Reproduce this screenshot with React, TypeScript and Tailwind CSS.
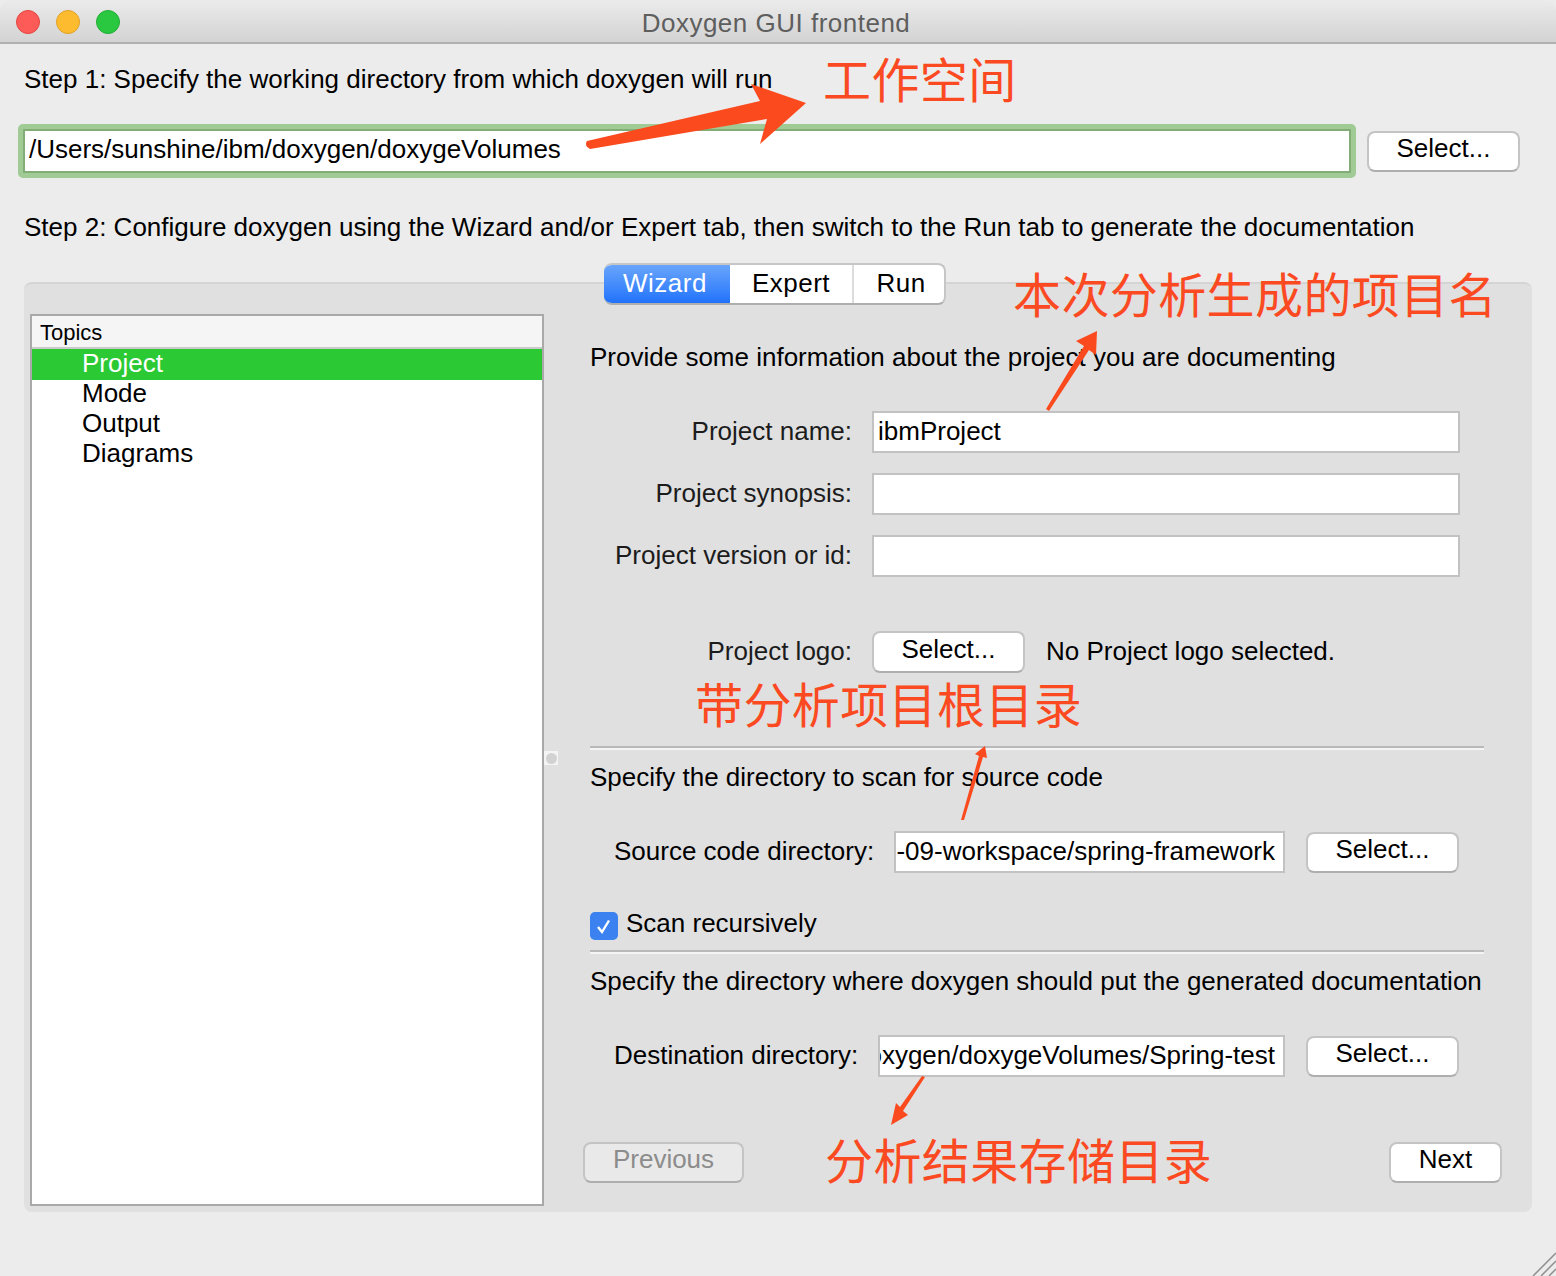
import React from 'react';

const CJK = "font-['Noto_Sans_CJK_SC',sans-serif] text-[#fb4a22] font-normal text-[48px] leading-none tracking-[0.4px] whitespace-nowrap absolute";

const MacButton = ({ label, className = '', disabled = false }: { label: string; className?: string; disabled?: boolean }) => (
  <div
    className={`flex items-center justify-center rounded-[8px] border-2 border-[#c4c4c4] border-b-[#aeaeae] pb-[7px] ${
      disabled ? 'bg-[#e9e9e9] text-[#8c8c8c]' : 'bg-white text-black'
    } ${className}`}
  >
    {label}
  </div>
);

const Field = ({ value = '', className = '', clip = false }: { value?: string; className?: string; clip?: boolean }) => (
  <div
    className={`h-[42px] bg-white border-2 border-[#c2c2c2] flex items-center overflow-hidden whitespace-nowrap pb-[2px] ${
      clip ? 'justify-end pr-[8px]' : 'pl-[4px]'
    } ${className}`}
  >
    <span className="shrink-0">{value}</span>
  </div>
);

const Divider = () => (
  <div className="w-[894px]">
    <div className="h-[2px] bg-[#b9b9b9]" />
    <div className="h-[2px] bg-[#f4f4f4]" />
  </div>
);

export default function App() {
  return (
    <div className="relative w-[1556px] h-[1276px] overflow-hidden bg-[#ececec] text-black text-[26px] leading-[30px] font-['Liberation_Sans',sans-serif]">
      {/* title bar */}
      <div className="relative flex items-center justify-center h-[44px] pt-[3px] pr-[4px] tracking-[0.5px] bg-gradient-to-b from-[#ebebeb] to-[#d3d3d3] border-b-2 border-[#b1b1b1] rounded-t-[10px] text-[#5e5e5e]">
        <div className="absolute left-[16px] top-[10px] flex gap-[16px]">
          <div className="w-[24px] h-[24px] rounded-full bg-[#fc5b57] border border-[#e3463f]" />
          <div className="w-[24px] h-[24px] rounded-full bg-[#fdbb2f] border border-[#e0a127]" />
          <div className="w-[24px] h-[24px] rounded-full bg-[#29c840] border border-[#22ad35]" />
        </div>
        Doxygen GUI frontend
      </div>

      {/* step 1 */}
      <div className="pl-[24px] pt-[20px] h-[80px]">Step 1: Specify the working directory from which doxygen will run</div>
      <div className="flex items-start pl-[18px]">
        <div className="w-[1338px] h-[54px] rounded-[5px] bg-[#a0cb94] p-[5px]">
          <div className="h-[44px] bg-white border-2 border-[#82ad77] flex items-center pl-[4px] pb-[4px]">/Users/sunshine/ibm/doxygen/doxygeVolumes</div>
        </div>
        <MacButton label="Select..." className="w-[153px] h-[41px] ml-[11px] mt-[7px]" />
      </div>

      {/* step 2 */}
      <div className="pl-[24px] pt-[34px] h-[85px]">Step 2: Configure doxygen using the Wizard and/or Expert tab, then switch to the Run tab to generate the documentation</div>

      {/* tab panel */}
      <div className="relative ml-[24px] mt-[19px] w-[1508px] h-[930px] bg-[#e0e0e0] border-t-2 border-[#d4d4d4] rounded-[8px]">
        <div className="absolute left-[580px] top-[-21px] flex w-[342px] h-[42px] rounded-[8px] overflow-hidden border-2 border-l-0 border-[#c6c6c6] border-b-[#aeaeae] bg-white tracking-[0.5px]">
          <div className="w-[126px] -mt-[2px] -mb-[2px] flex items-center justify-center pb-[2px] pr-[4px] text-white bg-gradient-to-b from-[#6ba7fb] to-[#1b6ffb]">Wizard</div>
          <div className="w-[124px] flex items-center justify-center pb-[2px] border-r-2 border-[#dcdcdc]">Expert</div>
          <div className="flex-1 flex items-center justify-center pb-[2px] pl-[4px]">Run</div>
        </div>

        <div className="flex pl-[6px] pt-[30px]">
          {/* topics list */}
          <div className="w-[514px] h-[892px] shrink-0 border-2 border-[#a9a9a9] bg-white">
            <div className="h-[33px] bg-[#f5f5f5] border-b-2 border-[#c9c9c9] pl-[8px] text-[22px] leading-[34px]">Topics</div>
            <div className="h-[31px] bg-[#2bca35] text-white pl-[50px] leading-[28px]">Project</div>
            <div className="h-[30px] pl-[50px] leading-[26px]">Mode</div>
            <div className="h-[30px] pl-[50px] leading-[26px]">Output</div>
            <div className="h-[30px] pl-[50px] leading-[26px]">Diagrams</div>
          </div>

          {/* splitter handle */}
          <div className="relative w-0">
            <div className="absolute left-0 top-[437px] w-[14px] h-[14px] bg-[#f4f4f4] flex items-center justify-center">
              <div className="w-[11px] h-[11px] rounded-full bg-[#d2d2d2]" />
            </div>
          </div>

          {/* wizard page */}
          <div className="flex flex-col ml-[46px] w-[942px] shrink-0">
            <div className="mt-[28px] h-[30px]">Provide some information about the project you are documenting</div>

            <div className="flex items-center mt-[39px] h-[42px]">
              <div className="w-[262px] pb-[2px] text-right text-[#1c1c1c]">Project name:</div>
              <Field value="ibmProject" className="w-[588px] ml-[20px]" />
            </div>
            <div className="flex items-center mt-[20px] h-[42px]">
              <div className="w-[262px] pb-[2px] text-right text-[#1c1c1c]">Project synopsis:</div>
              <Field className="w-[588px] ml-[20px]" />
            </div>
            <div className="flex items-center mt-[20px] h-[42px]">
              <div className="w-[262px] pb-[2px] text-right text-[#1c1c1c]">Project version or id:</div>
              <Field className="w-[588px] ml-[20px]" />
            </div>
            <div className="flex items-center mt-[54px] h-[42px]">
              <div className="w-[262px] pb-[2px] text-right text-[#1c1c1c]">Project logo:</div>
              <MacButton label="Select..." className="w-[153px] h-[42px] ml-[20px]" />
              <div className="ml-[21px] pb-[2px]">No Project logo selected.</div>
            </div>

            <div className="mt-[73px]"><Divider /></div>
            <div className="mt-[12px] h-[30px]">Specify the directory to scan for source code</div>
            <div className="flex items-center mt-[39px] h-[42px]">
              <div className="ml-[24px] w-[280px] pb-[2px]">Source code directory:</div>
              <Field value="-09-workspace/spring-framework" clip className="w-[391px]" />
              <MacButton label="Select..." className="w-[153px] h-[41px] ml-[21px]" />
            </div>

            <div className="flex items-center mt-[35px] h-[30px]">
              <div className="w-[28px] h-[28px] mt-[5px] rounded-[5px] bg-[#3b82f0] flex items-center justify-center">
                <svg width="18" height="18" viewBox="0 0 18 18" fill="none">
                  <path d="M3 10 L7 15 L14 3.5" stroke="white" strokeWidth="2.4" />
                </svg>
              </div>
              <div className="ml-[8px]">Scan recursively</div>
            </div>
            <div className="mt-[12px]"><Divider /></div>
            <div className="mt-[12px] h-[30px]">Specify the directory where doxygen should put the generated documentation</div>
            <div className="flex items-center mt-[39px] h-[42px]">
              <div className="ml-[24px] w-[264px] pb-[2px]">Destination directory:</div>
              <Field value="doxygen/doxygeVolumes/Spring-test" clip className="w-[407px]" />
              <MacButton label="Select..." className="w-[153px] h-[41px] ml-[21px]" />
            </div>

            <div className="flex justify-between mt-[65px] ml-[-7px] w-[919px]">
              <MacButton label="Previous" disabled className="w-[161px] h-[41px]" />
              <MacButton label="Next" className="w-[113px] h-[41px]" />
            </div>
          </div>
        </div>
      </div>

      {/* resize grip */}
      <svg className="absolute right-0 bottom-0" width="24" height="24" viewBox="0 0 24 24" stroke="#8f8f8f" strokeWidth="1.5">
        <path d="M1 24 L24 1 M9 24 L24 9 M17 24 L24 17" />
      </svg>

      {/* red annotations drawn over the screenshot */}
      <div className={`${CJK} left-[823px] top-[53px]`}>工作空间</div>
      <div className={`${CJK} left-[1013px] top-[268px]`}>本次分析生成的项目名</div>
      <div className={`${CJK} left-[695px] top-[678px]`}>带分析项目根目录</div>
      <div className={`${CJK} left-[825px] top-[1134px]`}>分析结果存储目录</div>
      <svg className="absolute left-0 top-0 pointer-events-none" width="1556" height="1276" viewBox="0 0 1556 1276" fill="#fb4a1e">
        <path d="M587 141 Q584 146 590 149 L767 119 L760 144 L806 103 L751 84 L760 101 Z" />
        <path d="M1046 409 L1084 346 L1076 341 L1097 331 L1096 355 L1089 350 L1049 411 Z" />
        <path d="M961 820 L979 756 L975 754 L985 746 L987 758 L983 757 L964 820 Z" />
        <path d="M925 1077 L903 1111 L908 1115 L891 1125 L896 1103 L900 1107 L922 1076 Z" />
      </svg>
    </div>
  );
}
